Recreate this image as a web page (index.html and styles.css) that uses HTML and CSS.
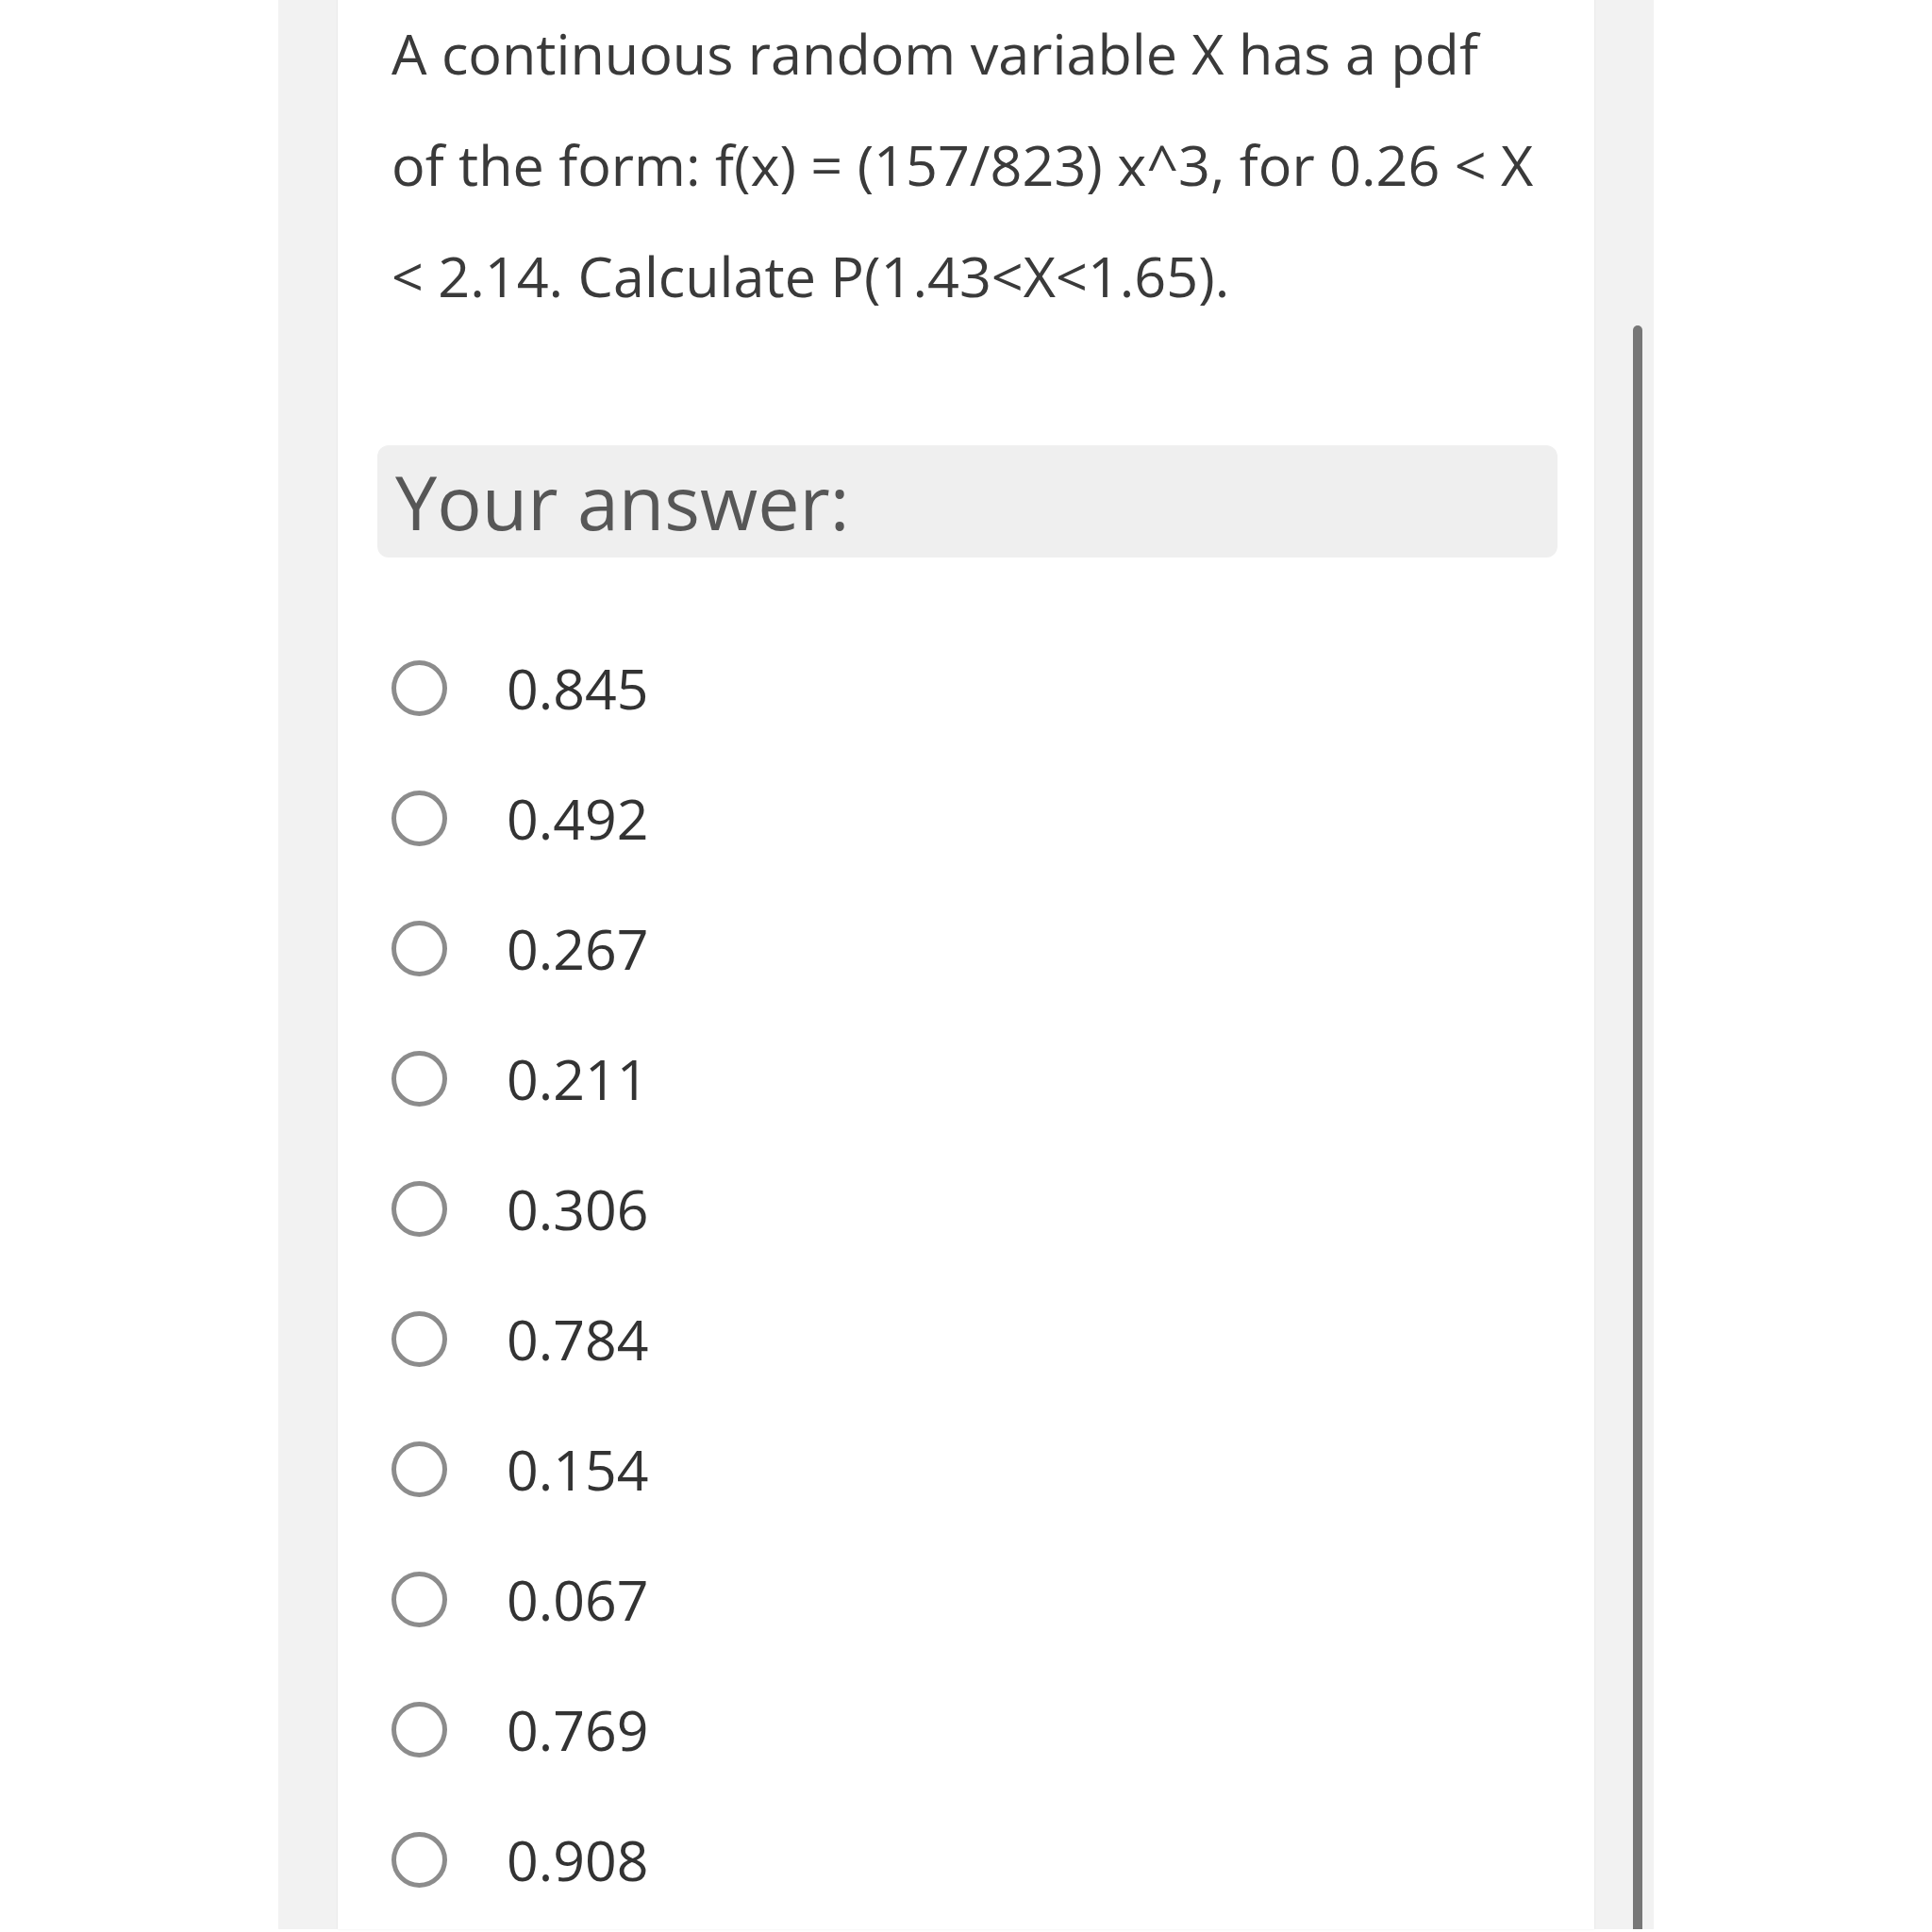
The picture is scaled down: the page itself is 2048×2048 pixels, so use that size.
FILE: index.html
```html
<!DOCTYPE html>
<html>
<head>
<meta charset="utf-8">
<link rel="stylesheet" href="styles.css">
</head>
<body>
<div class="panel">
  <div class="card">
    <p class="question">A continuous random variable X has a pdf<br>of the form: f(x) = (157/823) x^3, for 0.26 &lt; X<br>&lt; 2.14. Calculate P(1.43&lt;X&lt;1.65).</p>
    <div class="answer-box">Your answer:</div>
    <ul class="options">
      <li class="option"><span class="radio"></span><span class="label">0.845</span></li>
      <li class="option"><span class="radio"></span><span class="label">0.492</span></li>
      <li class="option"><span class="radio"></span><span class="label">0.267</span></li>
      <li class="option"><span class="radio"></span><span class="label">0.211</span></li>
      <li class="option"><span class="radio"></span><span class="label">0.306</span></li>
      <li class="option"><span class="radio"></span><span class="label">0.784</span></li>
      <li class="option"><span class="radio"></span><span class="label">0.154</span></li>
      <li class="option"><span class="radio"></span><span class="label">0.067</span></li>
      <li class="option"><span class="radio"></span><span class="label">0.769</span></li>
      <li class="option"><span class="radio"></span><span class="label">0.908</span></li>
    </ul>
  </div>
  <div class="scroll-thumb"></div>
</div>
</body>
</html>
```

FILE: styles.css
```css
html, body {
  margin: 0;
  padding: 0;
  background: #ffffff;
  height: 2048px;
  overflow: hidden;
  font-family: "Open Sans", "Noto Sans", sans-serif;
}

.panel {
  position: relative;
  margin-left: 295px;
  width: 1458px;
  height: 2048px;
  background: #f2f2f2;
}

.card {
  margin-left: 63px;
  width: 1332px;
  height: 2048px;
  background: #ffffff;
  box-shadow: 0 0 2px rgba(0, 0, 0, 0.08);
  box-sizing: border-box;
  padding: 0 20px 0 57px;
}

.question {
  margin: -3px 0 0 0;
  font-size: 59.3px;
  line-height: 118px;
  color: #3a3a3a;
}

.answer-box {
  margin: 121px 0 0 -15px;
  width: 1251px;
  height: 119px;
  box-sizing: border-box;
  padding-left: 19px;
  background: #efefef;
  border-radius: 12px;
  display: flex;
  align-items: center;
  font-size: 79px;
  color: #575757;
}

.options {
  list-style: none;
  margin: 69px 0 0 0;
  padding: 0;
}

.option {
  height: 138px;
  display: flex;
  align-items: center;
}

.radio {
  width: 59px;
  height: 59px;
  box-sizing: border-box;
  border: 5px solid #8c8c8c;
  border-radius: 50%;
  flex: none;
}

.label {
  margin-left: 63px;
  font-size: 59px;
  color: #333333;
}

.scroll-thumb {
  position: absolute;
  left: 1436px;
  top: 348px;
  width: 10px;
  height: 1700px;
  background: #777777;
  border-radius: 5px 5px 0 0;
}
```
